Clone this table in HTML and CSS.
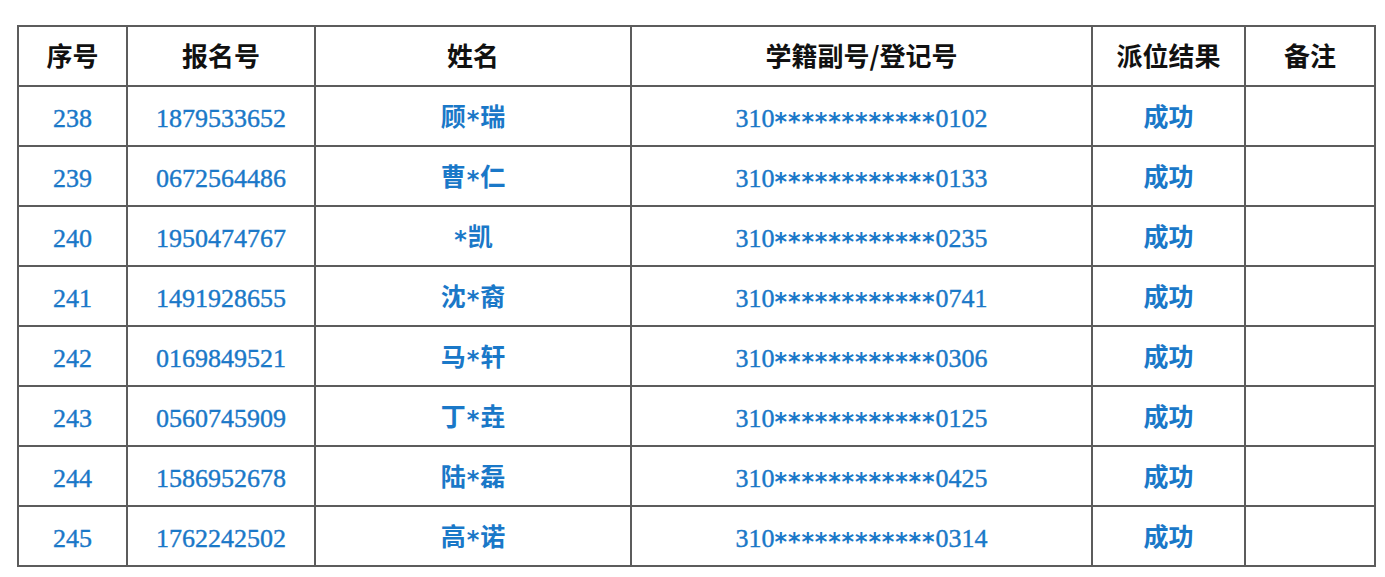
FILE: index.html
```html
<!DOCTYPE html>
<html lang="zh-CN">
<head>
<meta charset="utf-8">
<link rel="stylesheet" href="styles.css">
<title>派位结果</title>
</head>
<body>
<div class="page">
<table class="result">
  <colgroup>
    <col class="c1"><col class="c2"><col class="c3"><col class="c4"><col class="c5"><col class="c6">
  </colgroup>
  <thead>
    <tr><th>序号</th><th>报名号</th><th>姓名</th><th>学籍副号/登记号</th><th>派位结果</th><th>备注</th></tr>
  </thead>
  <tbody>
    <tr><td class="num">238</td><td class="num">1879533652</td><td class="cn">顾<span class="star">*</span>瑞</td><td class="num">310<span class="star">************</span>0102</td><td class="cn">成功</td><td></td></tr>
    <tr><td class="num">239</td><td class="num">0672564486</td><td class="cn">曹<span class="star">*</span>仁</td><td class="num">310<span class="star">************</span>0133</td><td class="cn">成功</td><td></td></tr>
    <tr><td class="num">240</td><td class="num">1950474767</td><td class="cn"><span class="star">*</span>凯</td><td class="num">310<span class="star">************</span>0235</td><td class="cn">成功</td><td></td></tr>
    <tr><td class="num">241</td><td class="num">1491928655</td><td class="cn">沈<span class="star">*</span>裔</td><td class="num">310<span class="star">************</span>0741</td><td class="cn">成功</td><td></td></tr>
    <tr><td class="num">242</td><td class="num">0169849521</td><td class="cn">马<span class="star">*</span>轩</td><td class="num">310<span class="star">************</span>0306</td><td class="cn">成功</td><td></td></tr>
    <tr><td class="num">243</td><td class="num">0560745909</td><td class="cn">丁<span class="star">*</span>垚</td><td class="num">310<span class="star">************</span>0125</td><td class="cn">成功</td><td></td></tr>
    <tr><td class="num">244</td><td class="num">1586952678</td><td class="cn">陆<span class="star">*</span>磊</td><td class="num">310<span class="star">************</span>0425</td><td class="cn">成功</td><td></td></tr>
    <tr><td class="num">245</td><td class="num">1762242502</td><td class="cn">高<span class="star">*</span>诺</td><td class="num">310<span class="star">************</span>0314</td><td class="cn">成功</td><td></td></tr>
  </tbody>
</table>
</div>
</body>
</html>
```
FILE: styles.css
```css
html, body {
  margin: 0;
  padding: 0;
  background: #ffffff;
}
.page {
  padding: 25px 0 0 17px;
}
.result {
  border-collapse: collapse;
  table-layout: fixed;
  width: 1357px;
  font-family: "Liberation Serif", "Noto Sans CJK SC", serif;
}
.c1 { width: 109px; }
.c2 { width: 188px; }
.c3 { width: 316px; }
.c4 { width: 461px; }
.c5 { width: 153px; }
.c6 { width: 130px; }
.result th,
.result td {
  border: 2px solid #5c5c5c;
  height: 58px;
  padding: 0;
  line-height: 30px;
  text-align: center;
  vertical-align: middle;
}
.result th {
  font-family: "Noto Sans CJK SC", sans-serif;
  font-weight: 700;
  font-size: 26px;
  color: #111111;
  padding-bottom: 2px;
  height: 56px;
}
.result td {
  color: #1a78c8;
}
.result td.num {
  font-size: 26px;
  padding-top: 6px;
  height: 52px;
  -webkit-text-stroke: 0.4px #1a78c8;
}
.result td.cn {
  font-family: "Noto Sans CJK SC", sans-serif;
  font-weight: 700;
  font-size: 25px;
  padding-bottom: 2px;
  height: 56px;
}
.star {
  font-family: "DejaVu Sans", sans-serif;
  font-weight: 700;
  font-size: 24px;
  line-height: 0;
  letter-spacing: 0.85px;
  vertical-align: -3px;
  -webkit-text-stroke: 0;
}
.cn .star {
  font-size: 24px;
  letter-spacing: 0;
  vertical-align: -2px;
  margin: 0 1px;
}
```
